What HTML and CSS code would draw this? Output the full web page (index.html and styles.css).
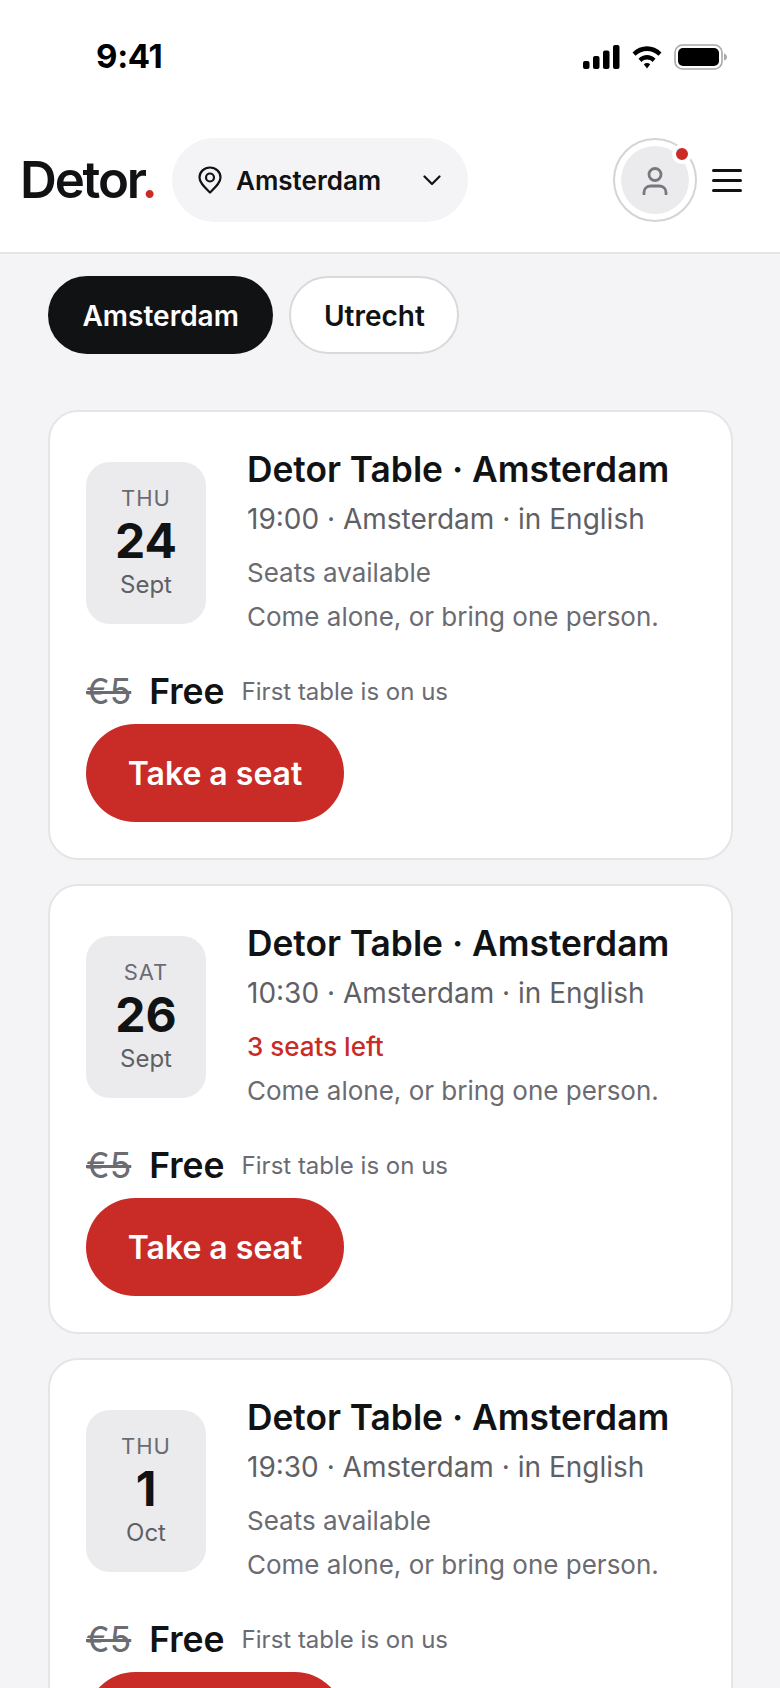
FILE: index.html
```html
<!DOCTYPE html>
<html lang="en">
<head>
    <meta charset="UTF-8">
    <meta name="viewport" content="width=device-width, initial-scale=1.0">
    <title>Detor</title>
    <link rel="stylesheet" href="styles.css">
</head>
<body>
    <div class="page">
        <div class="status-bar">
            <span class="clock">9:41</span>
            <div class="status-icons">
                <svg width="37" height="24" viewBox="0 0 37 24"><rect x="0" y="16" width="6.5" height="8" rx="2"/><rect x="10" y="11" width="6.5" height="13" rx="2"/><rect x="20" y="5.500" width="6.500" height="18.500" rx="2"/><rect x="30" y="0" width="6.500" height="24" rx="2"/></svg>
                <svg width="30" height="24" viewBox="0 0 30 24"><path d="M0.500 7.500C8.500 -0.800 21.500 -0.800 29.500 7.500L26.500 10.800C20 4.300 10 4.300 3.500 10.800Z"/><path d="M6.500 13.700C11.500 8.800 18.500 8.800 23.500 13.700L20.500 17C17.300 13.800 12.700 13.800 9.500 17Z"/><path d="M11.800 19.200C13.700 17.500 16.300 17.500 18.200 19.200L15 23.500Z"/></svg>
                <svg width="53" height="26" viewBox="0 0 53 26"><rect x="1" y="1" width="47" height="24" rx="7.500" fill="none" stroke="#a8a8a8" stroke-width="1.600"/><rect x="4" y="4" width="41" height="18" rx="5"/><path d="M50 9.500C52 10 53 11.500 53 13C53 14.500 52 16 50 16.500Z" fill="#a8a8a8"/></svg>
            </div>
        </div>

        <header class="topbar">
            <div class="logo">Detor<span class="logo-dot">.</span></div>
            <button class="city-select">
                <svg class="pin-icon" width="24" height="28" viewBox="0 0 24 28" fill="none" stroke="#111214" stroke-width="2.200"><path d="M12 26.500C7 21.500 1.500 17 1.500 11.500C1.500 5.700 6.200 1.500 12 1.500C17.800 1.500 22.500 5.700 22.500 11.500C22.500 17 17 21.500 12 26.500Z" stroke-linejoin="round"/><circle cx="12" cy="11.500" r="4"/></svg>
                <span class="city-name">Amsterdam</span>
                <svg class="chevron-icon" width="18" height="11" viewBox="0 0 18 11" fill="none" stroke="#111214" stroke-width="2.200" stroke-linecap="round" stroke-linejoin="round"><path d="M1.500 1.500L9 9L16.500 1.500"/></svg>
            </button>
            <div class="avatar">
                <div class="avatar-inner">
                    <svg width="26" height="28" viewBox="0 0 26 28" fill="none" stroke="#77777d" stroke-width="2.800" stroke-linecap="round"><circle cx="13" cy="7.500" r="6"/><path d="M2 27V25.500C2 21.500 5 19 9 19H17C21 19 24 21.500 24 25.500V27"/></svg>
                </div>
                <span class="avatar-dot"></span>
            </div>
            <div class="menu-icon">
                <span></span>
                <span></span>
                <span></span>
            </div>
        </header>

        <main class="content">
            <div class="chips">
                <button class="chip chip-active">Amsterdam</button>
                <button class="chip">Utrecht</button>
            </div>

            <article class="card">
                <div class="card-top">
                    <div class="date-box">
                        <span class="date-day">THU</span>
                        <span class="date-num">24</span>
                        <span class="date-month">Sept</span>
                    </div>
                    <div class="card-info">
                        <h2 class="card-title">Detor Table · Amsterdam</h2>
                        <p class="card-time">19:00 · Amsterdam · in English</p>
                        <p class="card-seats">Seats available</p>
                        <p class="card-note">Come alone, or bring one person.</p>
                    </div>
                </div>
                <div class="price-row">
                    <s class="price-old">€5</s>
                    <span class="price-free">Free</span>
                    <span class="price-note">First table is on us</span>
                </div>
                <button class="seat-btn">Take a seat</button>
            </article>

            <article class="card">
                <div class="card-top">
                    <div class="date-box">
                        <span class="date-day">SAT</span>
                        <span class="date-num">26</span>
                        <span class="date-month">Sept</span>
                    </div>
                    <div class="card-info">
                        <h2 class="card-title">Detor Table · Amsterdam</h2>
                        <p class="card-time">10:30 · Amsterdam · in English</p>
                        <p class="card-seats seats-low">3 seats left</p>
                        <p class="card-note">Come alone, or bring one person.</p>
                    </div>
                </div>
                <div class="price-row">
                    <s class="price-old">€5</s>
                    <span class="price-free">Free</span>
                    <span class="price-note">First table is on us</span>
                </div>
                <button class="seat-btn">Take a seat</button>
            </article>

            <article class="card">
                <div class="card-top">
                    <div class="date-box">
                        <span class="date-day">THU</span>
                        <span class="date-num">1</span>
                        <span class="date-month">Oct</span>
                    </div>
                    <div class="card-info">
                        <h2 class="card-title">Detor Table · Amsterdam</h2>
                        <p class="card-time">19:30 · Amsterdam · in English</p>
                        <p class="card-seats">Seats available</p>
                        <p class="card-note">Come alone, or bring one person.</p>
                    </div>
                </div>
                <div class="price-row">
                    <s class="price-old">€5</s>
                    <span class="price-free">Free</span>
                    <span class="price-note">First table is on us</span>
                </div>
                <button class="seat-btn">Take a seat</button>
            </article>
        </main>
    </div>
</body>
</html>
```

FILE: styles.css
```css
* {
    box-sizing: border-box;
}
html, body {
    margin: 0;
    padding: 0;
    overflow: hidden;
}
body {
    font-family: Inter, "Liberation Sans", sans-serif;
    color: #111214;
    background-color: #f4f4f6;
}
button {
    font-family: inherit;
    color: inherit;
    border: none;
    padding: 0;
}
p, h2 {
    margin: 0;
}
.page {
    width: 780px;
    height: 1688px;
    overflow: hidden;
}

/* status bar */
.status-bar {
    height: 114px;
    background-color: #fff;
    display: flex;
    justify-content: space-between;
    align-items: flex-start;
    padding: 36px 53px 0 96px;
}
.clock {
    font-size: 33px;
    line-height: 40px;
    font-weight: 700;
    letter-spacing: -0.300px;
    color: #000;
}
.status-icons {
    display: flex;
    align-items: center;
    gap: 12px;
    padding-top: 8px;
}

/* header */
.topbar {
    height: 140px;
    background-color: #fff;
    border-bottom: 2px solid #e5e5e7;
    display: flex;
    align-items: flex-start;
    padding: 24px 38px 0 20px;
}
.logo {
    font-size: 51px;
    line-height: 84px;
    font-weight: 600;
    letter-spacing: -2.200px;
    width: 152px;
}
.logo-dot {
    color: #c92b27;
}
.city-select {
    width: 296px;
    height: 84px;
    border-radius: 42px;
    background-color: #f4f4f6;
    display: flex;
    align-items: center;
    padding: 0 27px 0 26px;
}
.city-name {
    font-size: 26px;
    font-weight: 600;
    margin-left: 14px;
    flex: 1;
    text-align: left;
}
.avatar {
    position: relative;
    width: 84px;
    height: 84px;
    margin-left: auto;
    border: 2px solid #d4d4d6;
    border-radius: 50%;
    display: flex;
    align-items: center;
    justify-content: center;
}
.avatar-inner {
    width: 68px;
    height: 68px;
    border-radius: 50%;
    background-color: #ebebed;
    display: flex;
    align-items: center;
    justify-content: center;
    padding-top: 2px;
}
.avatar-dot {
    position: absolute;
    top: 4px;
    right: 3px;
    width: 20px;
    height: 20px;
    border-radius: 50%;
    background-color: #c92b27;
    border: 4px solid #fff;
}
.menu-icon {
    width: 30px;
    height: 84px;
    margin-left: 15px;
    display: flex;
    flex-direction: column;
    justify-content: center;
    gap: 7px;
}
.menu-icon span {
    display: block;
    height: 3px;
    border-radius: 2px;
    background-color: #111214;
}

/* chips */
.content {
    padding: 22px 47px 0 48px;
}
.chips {
    display: flex;
    gap: 16px;
    margin-bottom: 56px;
}
.chip {
    height: 78px;
    padding: 2px 32.500px 0;
    border-radius: 39px;
    background-color: #fff;
    border: 2px solid #d9d9dc;
    font-size: 28px;
    font-weight: 600;
}
.chip-active {
    background-color: #111214;
    border-color: #111214;
    color: #fff;
}

/* event cards */
.card {
    height: 450px;
    margin-bottom: 24px;
    background-color: #fff;
    border: 2px solid #e5e5e7;
    border-radius: 30px;
    padding: 36px 36px 0;
}
.card-top {
    display: flex;
    gap: 41px;
}
.date-box {
    width: 120px;
    height: 162px;
    margin-top: 14px;
    flex-shrink: 0;
    border-radius: 24px;
    background-color: #ebebed;
    display: flex;
    flex-direction: column;
    align-items: center;
}
.date-day {
    font-size: 22px;
    line-height: 26px;
    letter-spacing: 1px;
    color: #6b6b72;
    margin-top: 23px;
}
.date-num {
    font-size: 48px;
    line-height: 54px;
    font-weight: 700;
    margin-top: 3px;
}
.date-month {
    font-size: 24px;
    line-height: 28px;
    color: #5f5f66;
    margin-top: 3px;
}
.card-title {
    font-size: 35.300px;
    line-height: 44px;
    font-weight: 600;
}
.card-time {
    font-size: 28px;
    line-height: 36px;
    color: #5f5f66;
    margin-top: 9px;
}
.card-seats {
    font-size: 26px;
    line-height: 32px;
    color: #6b6b72;
    margin-top: 20px;
}
.seats-low {
    color: #c92b27;
    font-weight: 500;
}
.card-note {
    font-size: 26px;
    line-height: 32px;
    color: #6b6b72;
    margin-top: 12px;
}
.price-row {
    display: flex;
    align-items: center;
    margin-top: 37px;
    line-height: 44px;
}
.price-old {
    font-size: 35.500px;
    color: #6b6b72;
}
.price-free {
    font-size: 35.500px;
    font-weight: 600;
    margin-left: 18px;
}
.price-note {
    font-size: 24px;
    color: #6b6b72;
    margin-left: 17px;
}
.seat-btn {
    display: block;
    width: 258px;
    height: 98px;
    margin-top: 10px;
    border-radius: 49px;
    background-color: #c92b27;
    color: #fff;
    font-size: 32px;
    font-weight: 600;
}
```
